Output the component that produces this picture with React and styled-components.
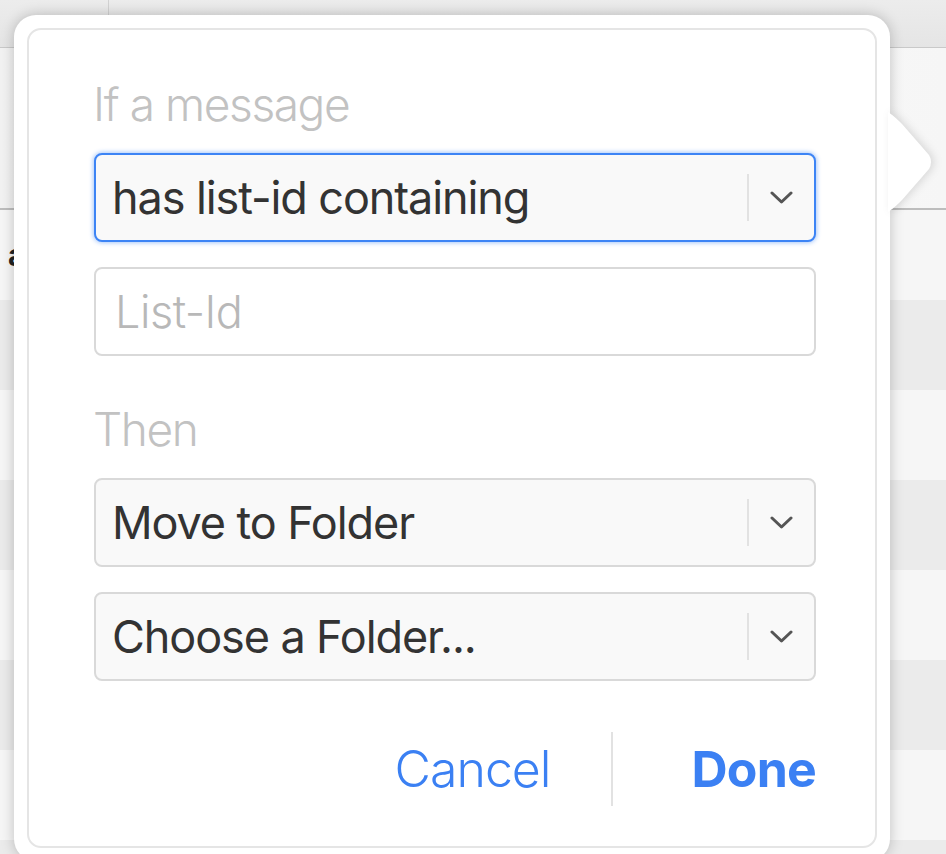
import React from 'react';
import styled, { createGlobalStyle } from 'styled-components';

const GlobalStyle = createGlobalStyle`
    html, body {
        margin: 0;
        padding: 0;
        overflow: hidden;
        background: #f4f4f4;
    }
    * {
        box-sizing: border-box;
    }
`;

const Page = styled.div`
    position: relative;
    width: 946px;
    height: 854px;
    overflow: hidden;
    font-family: Inter, "Liberation Sans", sans-serif;
    background: #f4f4f4;
`;

const Header = styled.div`
    display: flex;
    height: 48px;
    background: linear-gradient(#ececec, #e5e5e5);
    border-bottom: 1px solid #c9c9c9;
`;

const HeaderCell = styled.div`
    width: 109px;
    border-right: 1px solid #d2d2d2;
`;

const Toolbar = styled.div`
    height: 162px;
    background: linear-gradient(90deg, #f2f2f2, #fafafa 60%, #f6f6f6);
    border-bottom: 2px solid #bdbdbd;
`;

const Row = styled.div`
    height: 90px;
    padding: 27px 0 0 8px;
    background: ${(p) => (p.$shaded ? '#ebebeb' : '#f6f6f6')};
    font-size: 30px;
    font-weight: 700;
    color: #222;
`;

const Popover = styled.div`
    position: absolute;
    left: 14px;
    top: 15px;
    width: 876px;
    height: 846px;
    padding: 13px;
    background: #fff;
    border-radius: 22px;
    box-shadow: 0 0 14px rgba(0, 0, 0, 0.22);
`;

const Arrow = styled.svg`
    position: absolute;
    left: 874px;
    top: 83px;
    filter: drop-shadow(3px 0 4px rgba(0, 0, 0, 0.12));
`;

const Panel = styled.div`
    display: flex;
    flex-direction: column;
    height: 100%;
    padding: 48px 59px 0 65px;
    border: 2px solid #e5e5e5;
    border-radius: 14px;
`;

const Label = styled.div`
    height: 52px;
    margin: ${(p) => (p.$spaced ? '47px' : '0')} 0 23px -1px;
    font-size: 46px;
    font-weight: 300;
    line-height: 52px;
    color: #c2c2c2;
    letter-spacing: -1.4px;
`;

const FieldGroup = styled.div`
    display: flex;
    flex-direction: column;
    gap: 25px;
`;

const Select = styled.div`
    display: flex;
    align-items: center;
    height: 89px;
    background: #f9f9f9;
    border: 2px solid ${(p) => (p.$focused ? '#3d84f5' : '#d9d9d9')};
    border-radius: 8px;
    box-shadow: ${(p) => (p.$focused ? '0 0 4px 1px rgba(61, 132, 245, 0.45)' : 'none')};
`;

const Value = styled.div`
    flex: 1;
    padding-left: 16px;
    font-size: 45px;
    color: #333;
    letter-spacing: -1.1px;
`;

const Divider = styled.div`
    width: 2px;
    height: ${(p) => p.$h}px;
    background: #e2e2e2;
`;

const ChevronBox = styled.div`
    display: flex;
    align-items: center;
    justify-content: center;
    width: 65px;
`;

const TextInput = styled.input`
    height: 89px;
    padding: 0 0 0 19px;
    background: #fff;
    border: 2px solid #d9d9d9;
    border-radius: 8px;
    font-family: inherit;
    font-size: 45px;
    font-weight: 300;
    color: #333;
    letter-spacing: -0.5px;
    outline: none;

    &::placeholder {
        color: #b8b8b8;
    }
`;

const Footer = styled.div`
    display: flex;
    justify-content: flex-end;
    align-items: center;
    height: 74px;
    margin-top: 51px;
`;

const ActionButton = styled.button`
    padding: 0;
    border: none;
    background: none;
    font-family: inherit;
    font-size: 50px;
    font-weight: ${(p) => (p.$primary ? 700 : 300)};
    color: #3b80f3;
    letter-spacing: ${(p) => (p.$primary ? '-0.8px' : '-1px')};
    cursor: pointer;
`;

const FooterDivider = styled(Divider)`
    height: 74px;
    margin: 0 79px 0 60px;
`;

function Chevron() {
    return (
        <svg width="23" height="13" viewBox="0 0 23 13">
            <path d="M2 2 L11.5 11 L21 2" fill="none" stroke="#555" strokeWidth="3" strokeLinecap="round" strokeLinejoin="round" />
        </svg>
    );
}

function Dropdown({ value, focused }) {
    return (
        <Select $focused={focused}>
            <Value>{value}</Value>
            <Divider $h={47} />
            <ChevronBox>
                <Chevron />
            </ChevronBox>
        </Select>
    );
}

export default function App() {
    return (
        <Page>
            <GlobalStyle />
            <Header>
                <HeaderCell />
            </Header>
            <Toolbar />
            <Row>a</Row>
            <Row $shaded />
            <Row />
            <Row $shaded />
            <Row />
            <Row $shaded />
            <Row />
            <Row $shaded />

            <Popover>
                <Arrow width="48" height="128" viewBox="0 0 48 128">
                    <path d="M0 14 C6 18 10 22 14 26 L41 57 Q45 64 41 71 L14 102 C10 106 6 110 0 114 Z" fill="#fff" />
                </Arrow>
                <Panel>
                    <Label>If a message</Label>
                    <FieldGroup>
                        <Dropdown value="has list-id containing" focused />
                        <TextInput placeholder="List-Id" />
                    </FieldGroup>
                    <Label $spaced>Then</Label>
                    <FieldGroup>
                        <Dropdown value="Move to Folder" />
                        <Dropdown value="Choose a Folder..." />
                    </FieldGroup>
                    <Footer>
                        <ActionButton>Cancel</ActionButton>
                        <FooterDivider />
                        <ActionButton $primary>Done</ActionButton>
                    </Footer>
                </Panel>
            </Popover>
        </Page>
    );
}
